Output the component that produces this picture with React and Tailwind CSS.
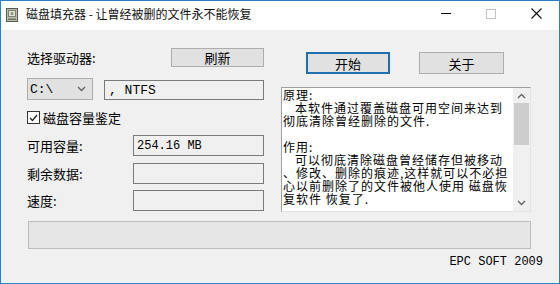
import React from 'react';

const cjk = { fontFamily: '"Noto Sans CJK SC", "Noto Sans", sans-serif' };
const mono = { fontFamily: '"Liberation Mono", "Noto Sans CJK SC", monospace' };

const Chevron = ({ up }) => (
  <svg width="9" height="6" viewBox="0 0 9 6">
    <path d={up ? 'M1 5 L4.5 1.5 L8 5' : 'M1 1 L4.5 4.5 L8 1'} fill="none" stroke="#606060" strokeWidth="1.3" />
  </svg>
);

const DiskIcon = () => (
  <svg width="12" height="14" viewBox="0 0 12 14">
    <rect x="0.5" y="0.5" width="11" height="13" fill="#b9bcb0" stroke="#55594f" />
    <rect x="2.5" y="2.5" width="7" height="6" fill="#dfe4d2" stroke="#7c8071" />
    <circle cx="6" cy="5.5" r="1.5" fill="#8a9077" />
    <rect x="2" y="10.5" width="8" height="1.5" fill="#6f745f" />
  </svg>
);

const ValueRow = ({ label, value, className }) => (
  <div className={'flex items-center justify-between h-[21px] ' + className}>
    <span className="text-[13px] leading-[13px]">{label}</span>
    <div className="w-[131px] h-[21px] border border-[#7a7a7a] bg-[#f0f0f0] flex items-center px-[3px]">
      <span className="text-[12px] leading-[12px]" style={mono}>{value}</span>
    </div>
  </div>
);

const infoLines = [
  ['原理:', false],
  ['本软件通过覆盖磁盘可用空间来达到', true],
  ['彻底清除曾经删除的文件.', false],
  ['', false],
  ['作用:', false],
  ['可以彻底清除磁盘曾经储存但被移动', true],
  ['、修改、删除的痕迹,这样就可以不必担', false],
  ['心以前删除了的文件被他人使用 磁盘恢', false],
  ['复软件 恢复了.', false],
];

export default function App() {
  return (
    <div className="w-[560px] h-[284px] bg-[#f0f0f0] border border-[#2f7fc4] flex flex-col text-black overflow-hidden" style={cjk}>
      {/* title bar */}
      <div className="h-[29px] bg-white flex items-center shrink-0">
        <div className="ml-[5px] mt-[-2px]"><DiskIcon /></div>
        <span className="ml-[8px] text-[12px] leading-[12px] mt-[-3px] text-[#111]">磁盘填充器 - 让曾经被删的文件永不能恢复</span>
        <div className="ml-auto flex items-center mt-[-4px]">
          <div className="w-[10px] h-px bg-black mr-[35px]" />
          <div className="w-[10px] h-[10px] border border-[#c4c4c4] mr-[35px]" />
          <svg width="11" height="11" viewBox="0 0 11 11" className="mr-[17px]">
            <path d="M0.5 0.5 L10.5 10.5 M10.5 0.5 L0.5 10.5" stroke="#111" strokeWidth="1.1" />
          </svg>
        </div>
      </div>

      {/* main area */}
      <div className="flex pt-[18px] pl-[26px]">
        <div className="w-[237px] flex flex-col">
          <div className="h-[19px] flex items-center justify-between">
            <span className="text-[13px] leading-[13px]">选择驱动器:</span>
            <div className="w-[93px] h-[19px] bg-[#e1e1e1] border border-[#adadad] flex items-center justify-center text-[13px] leading-[13px]">刷新</div>
          </div>
          <div className="flex items-end mt-[11px]">
            <div className="w-[66px] h-[22px] bg-[#e1e1e1] border border-[#adadad] flex items-center justify-between pl-[2px] pr-[6px]">
              <span className="text-[13px] leading-[13px]" style={mono}>C:\</span>
              <Chevron />
            </div>
            <div className="ml-[11px] w-[160px] h-[20px] border border-[#7a7a7a] bg-[#f0f0f0] flex items-center px-[4px]">
              <span className="text-[13px] leading-[13px]" style={mono}>, NTFS</span>
            </div>
          </div>
          <div className="flex items-center mt-[11px] h-[13px]">
            <div className="w-[13px] h-[13px] border border-[#333] bg-white flex items-center justify-center">
              <svg width="9" height="8" viewBox="0 0 9 8">
                <path d="M1 4 L3.5 6.5 L8 1" fill="none" stroke="#222" strokeWidth="1.3" />
              </svg>
            </div>
            <span className="ml-[3px] text-[13px] leading-[13px]">磁盘容量鉴定</span>
          </div>
          <ValueRow label="可用容量:" value="254.16 MB" className="mt-[11px]" />
          <ValueRow label="剩余数据:" value="" className="mt-[7px]" />
          <ValueRow label="速度:" value="" className="mt-[6px]" />
        </div>

        <div className="ml-[17px] w-[250px] flex flex-col">
          <div className="flex mt-[4px]">
            <div className="ml-[25px] w-[84px] h-[22px] bg-[#e1e1e1] border-2 border-[#1f6fae] flex items-center justify-center text-[13px] leading-[13px]">开始</div>
            <div className="ml-[29px] w-[85px] h-[22px] bg-[#e1e1e1] border border-[#adadad] flex items-center justify-center text-[13px] leading-[13px]">关于</div>
          </div>
          <div className="mt-[13px] h-[125px] flex border border-t-[#a0a0a0] border-l-[#a0a0a0] border-r-[#e3e3e3] border-b-[#e3e3e3] bg-white">
            <div className="flex-1 pl-[1px] text-[12px] leading-[13px] tracking-[1px] whitespace-pre">
              {infoLines.map(([t, indent], i) => (
                <div key={i} className={'h-[13px] ' + (indent ? 'pl-[12px]' : '')}>{t}</div>
              ))}
            </div>
            <div className="w-[17px] bg-[#f0f0f0] flex flex-col items-center">
              <div className="h-[15px] flex items-center justify-center"><Chevron up /></div>
              <div className="w-[15px] h-[42px] bg-[#cdcdcd]" />
              <div className="flex-1" />
              <div className="h-[17px] flex items-center justify-center"><Chevron /></div>
            </div>
          </div>
        </div>
      </div>

      {/* progress bar */}
      <div className="mt-[9px] ml-[27px] w-[503px] h-[28px] bg-[#e6e6e6] border border-[#bcbcbc]" />

      {/* footer */}
      <div className="mt-[7px] pr-[16px] flex justify-end">
        <span className="text-[12px] leading-[13px]" style={mono}>EPC SOFT 2009</span>
      </div>
    </div>
  );
}
